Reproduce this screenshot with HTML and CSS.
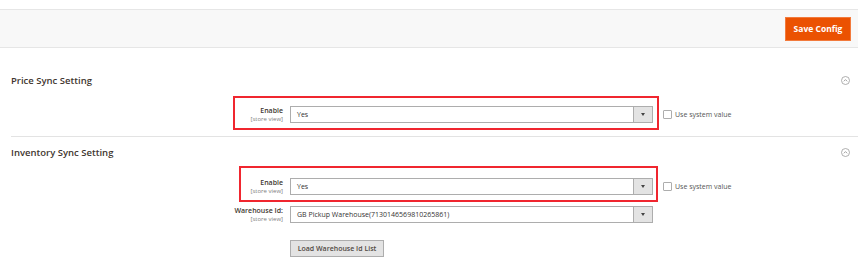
FILE: index.html
```html
<!DOCTYPE html>
<html lang="en">
<head>
  <meta charset="UTF-8">
  <title>Configuration</title>
  <link rel="stylesheet" href="styles.css">
</head>
<body>
  <div class="toolbar">
    <button class="save-btn">Save Config</button>
  </div>

  <div class="section">
    <div class="section-head">
      <span class="section-title">Price Sync Setting</span>
      <svg class="collapse" width="9" height="9" viewBox="0 0 9 9">
        <circle cx="4.5" cy="4.5" r="4" fill="none" stroke="#9a9a9a" stroke-width="0.8"/>
        <path d="M2.8 5.3 L4.5 3.6 L6.2 5.3" fill="none" stroke="#8a8a8a" stroke-width="0.8"/>
      </svg>
    </div>
    <div class="rows">
      <div class="row mark mark-a">
        <div class="label"><b>Enable</b><span>[store view]</span></div>
        <div class="select"><span>Yes</span><i class="arrow"></i></div>
        <label class="use-system"><i class="check"></i>Use system value</label>
      </div>
    </div>
  </div>

  <div class="section last">
    <div class="section-head">
      <span class="section-title">Inventory Sync Setting</span>
      <svg class="collapse" width="9" height="9" viewBox="0 0 9 9">
        <circle cx="4.5" cy="4.5" r="4" fill="none" stroke="#9a9a9a" stroke-width="0.8"/>
        <path d="M2.8 5.3 L4.5 3.6 L6.2 5.3" fill="none" stroke="#8a8a8a" stroke-width="0.8"/>
      </svg>
    </div>
    <div class="rows">
      <div class="row mark mark-b">
        <div class="label"><b>Enable</b><span>[store view]</span></div>
        <div class="select"><span>Yes</span><i class="arrow"></i></div>
        <label class="use-system"><i class="check"></i>Use system value</label>
      </div>
      <div class="row">
        <div class="label"><b>Warehouse Id:</b><span>[store view]</span></div>
        <div class="select"><span>GB Pickup Warehouse(7130146569810265861)</span><i class="arrow"></i></div>
      </div>
      <div class="row">
        <div class="label"></div>
        <div><button class="load-btn">Load Warehouse Id List</button></div>
      </div>
    </div>
  </div>
</body>
</html>
```

FILE: styles.css
```css
body {
  margin: 0;
  background: #fff;
  font-family: "Open Sans", "Liberation Sans", sans-serif;
  color: #333;
}
.toolbar {
  margin: 9px 6px 0 0;
  height: 37px;
  background: #f8f8f8;
  border-top: 1px solid #e6e6e6;
  border-bottom: 1px solid #e6e6e6;
  display: flex;
  justify-content: flex-end;
  align-items: center;
}
.save-btn {
  margin-right: 7px;
  width: 66px;
  height: 24px;
  padding: 0;
  background: #eb5202;
  border: 1px solid #f27a3c;
  color: #fff;
  font-family: inherit;
  font-weight: 700;
  font-size: 8.5px;
}
.section {
  margin: 0 6px 0 11px;
  padding: 25px 0 13px;
  border-bottom: 1px solid #e3e3e3;
}
.section.last {
  padding-top: 8px;
  border-bottom: none;
}
.section-head {
  display: flex;
  justify-content: space-between;
  align-items: center;
  height: 14px;
}
.section-title {
  font-size: 9.5px;
  font-weight: 600;
  color: #41362f;
}
.collapse {
  margin-right: 8px;
}
.rows {
  margin-top: 19px;
  display: flex;
  flex-direction: column;
  gap: 11px;
}
.row {
  display: grid;
  grid-template-columns: 272px 363px auto;
  column-gap: 7px;
  height: 17px;
  align-items: center;
}
.label {
  text-align: right;
  display: flex;
  flex-direction: column;
  line-height: 8px;
}
.label b {
  font-size: 7px;
  font-weight: 600;
  color: #41362f;
}
.label span {
  font-size: 6px;
  color: #808080;
}
.select {
  height: 17px;
  box-sizing: border-box;
  border: 1px solid #adadad;
  display: flex;
  align-items: center;
  justify-content: space-between;
  font-size: 7px;
  color: #333;
}
.select span {
  padding-left: 6px;
}
.arrow {
  width: 18px;
  height: 15px;
  background: #e3e3e3;
  border-left: 1px solid #adadad;
  display: flex;
  align-items: center;
  justify-content: center;
}
.arrow::after {
  content: "";
  border-left: 2px solid transparent;
  border-right: 2px solid transparent;
  border-top: 3px solid #444;
}
.use-system {
  display: flex;
  align-items: center;
  gap: 3px;
  margin-left: 3px;
  font-size: 7px;
  color: #555;
}
.check {
  width: 7px;
  height: 7px;
  border: 1px solid #adadad;
  border-radius: 1px;
  background: #fff;
}
.load-btn {
  width: 94px;
  height: 17px;
  padding: 0;
  background: #e3e3e3;
  border: 1px solid #adadad;
  font-family: inherit;
  font-size: 7px;
  font-weight: 600;
  color: #514943;
}
.mark {
  position: relative;
}
.mark::before {
  content: "";
  position: absolute;
  border: 2px solid #f0262f;
  pointer-events: none;
}
.mark-a::before {
  left: 222px;
  top: -10px;
  width: 422px;
  height: 30px;
}
.mark-b::before {
  left: 228px;
  top: -12px;
  width: 415px;
  height: 32px;
}
```
